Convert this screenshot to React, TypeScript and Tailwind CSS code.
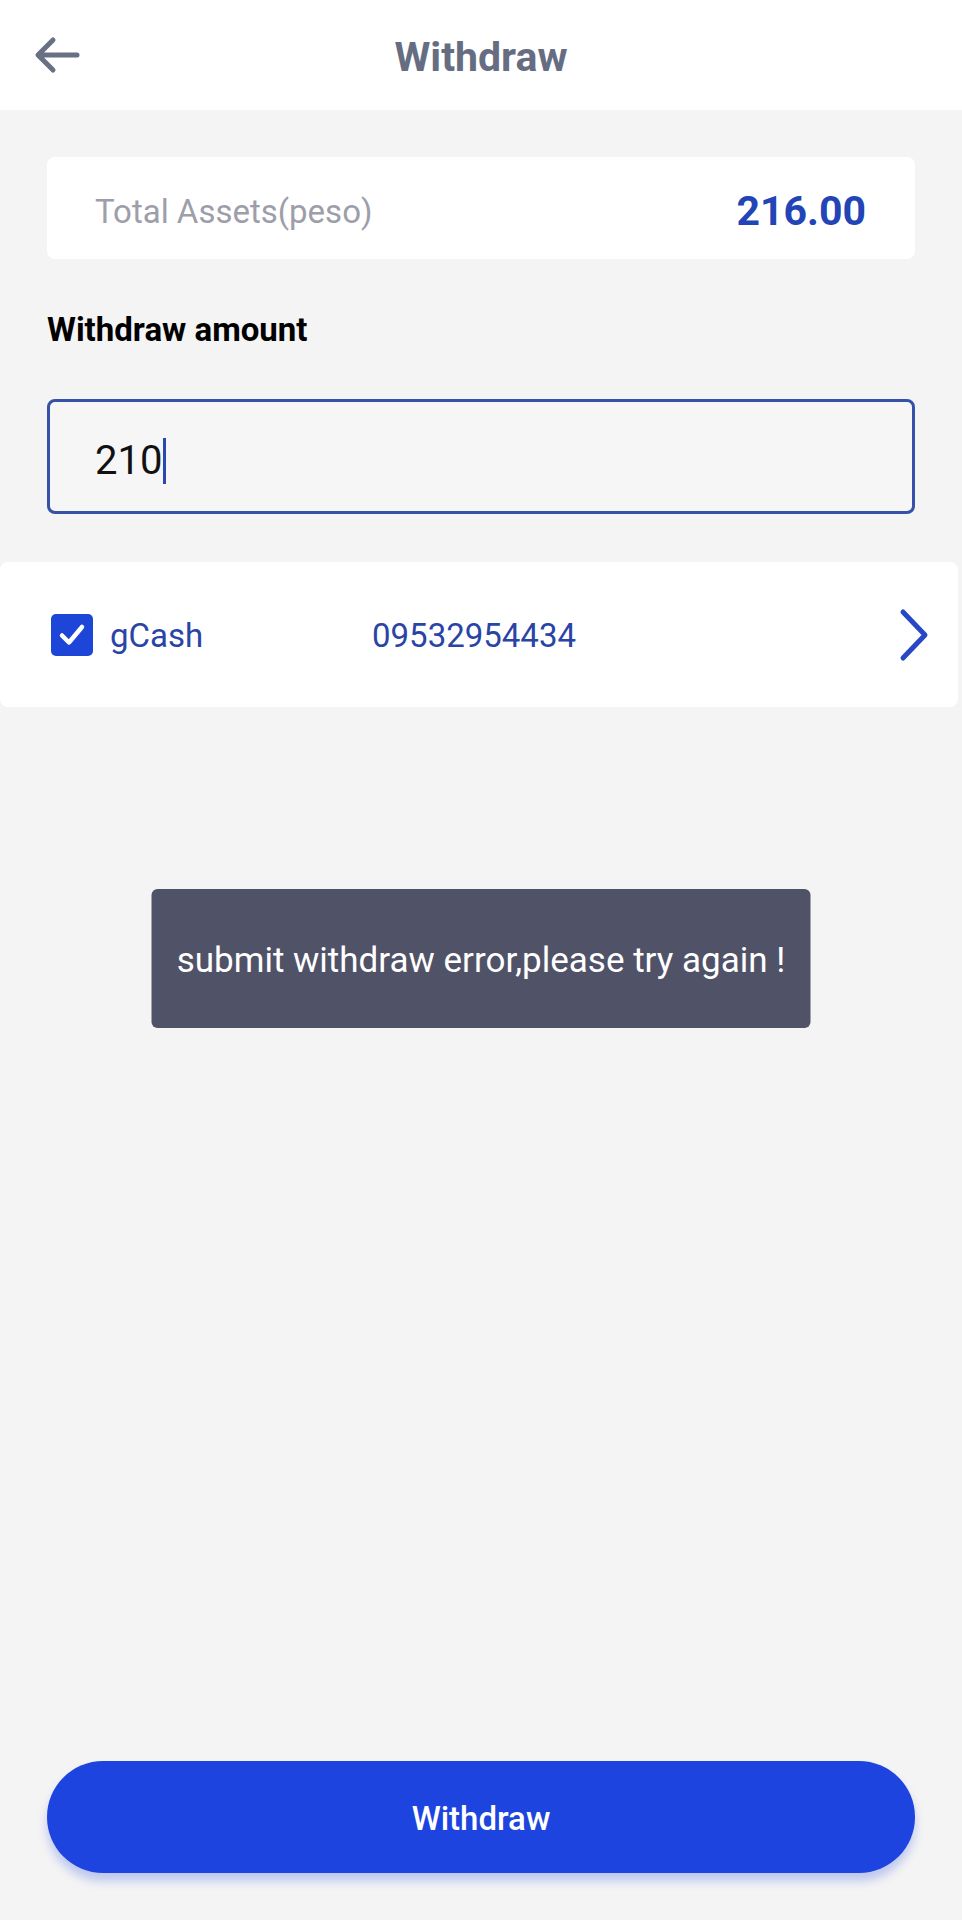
import React from "react";

const font = { fontFamily: "Roboto, 'Noto Sans', sans-serif" };

export default function App() {
  return (
    <div
      className="relative flex min-h-[1920px] w-full flex-col bg-[#f4f4f5]"
      style={font}
    >
      {/* Header */}
      <div className="grid h-[110px] grid-cols-[1fr_auto_1fr] items-center bg-white">
        <div className="pl-[34px]">
          <svg width="46" height="38" viewBox="0 0 46 38" fill="none">
            <path
              d="M43 19H5M19 4L4 19l15 15"
              stroke="#687083"
              strokeWidth="5"
              strokeLinecap="round"
              strokeLinejoin="round"
            />
          </svg>
        </div>
        <h1 className="pt-[5px] text-[41px] font-bold text-[#666d82]">Withdraw</h1>
        <div />
      </div>

      {/* Content */}
      <div className="px-[47px] pt-[47px]">
        <div className="flex h-[102px] items-center justify-between rounded-lg bg-white pl-[48px] pr-[49px] pt-[8px]">
          <span className="text-[33px] text-[#9d9ea9]">Total Assets(peso)</span>
          <span className="text-[41px] font-bold text-[#2244b6]">216.00</span>
        </div>

        <div className="mt-[52px] text-[33px] font-bold leading-[38px] text-black">
          Withdraw amount
        </div>

        <div className="mt-[50px] flex h-[115px] items-center rounded-lg border-[3px] border-[#3651a8] bg-[#f6f6f7] pl-[45px] pt-[8px]">
          <span className="text-[40px] text-[#111]">210</span>
          <span className="ml-[1px] h-[46px] w-[3px] bg-[#2c47b0]" />
        </div>
      </div>

      {/* Account row */}
      <div className="mt-[48px] mr-[4px] flex h-[145px] items-center rounded-lg bg-white pl-[51px] pr-[28px]">
        <div className="flex h-[42px] w-[42px] items-center justify-center rounded-[5px] bg-[#1d45d8]">
          <svg width="28" height="24" viewBox="0 0 28 24" fill="none">
            <path
              d="M4 12.5l7 7L24 4"
              stroke="white"
              strokeWidth="4.5"
              strokeLinecap="round"
              strokeLinejoin="round"
            />
          </svg>
        </div>
        <span className="ml-[17px] w-[262px] pt-[2px] text-[33px] text-[#2a44a6]">gCash</span>
        <span className="pt-[2px] text-[33px] text-[#2a44a6]">09532954434</span>
        <svg
          className="ml-auto"
          width="32"
          height="54"
          viewBox="0 0 32 54"
          fill="none"
        >
          <path
            d="M5 4l22 23L5 50"
            stroke="#2847c4"
            strokeWidth="5"
            strokeLinecap="round"
            strokeLinejoin="round"
          />
        </svg>
      </div>

      {/* Toast */}
      <div className="absolute left-1/2 top-[889px] flex h-[139px] w-[659px] -translate-x-1/2 items-center justify-center rounded-md bg-[#505267] pt-[5px]">
        <span className="text-[35px] text-white">
          submit withdraw error,please try again !
        </span>
      </div>

      {/* Button */}
      <div className="mt-auto px-[47px] pb-[47px]">
        <button className="flex h-[112px] w-full items-center justify-center rounded-full bg-[#1d44de] pt-[4px] text-[33px] font-medium text-white shadow-[0_8px_10px_rgba(29,68,222,0.25)]">
          Withdraw
        </button>
      </div>
    </div>
  );
}
